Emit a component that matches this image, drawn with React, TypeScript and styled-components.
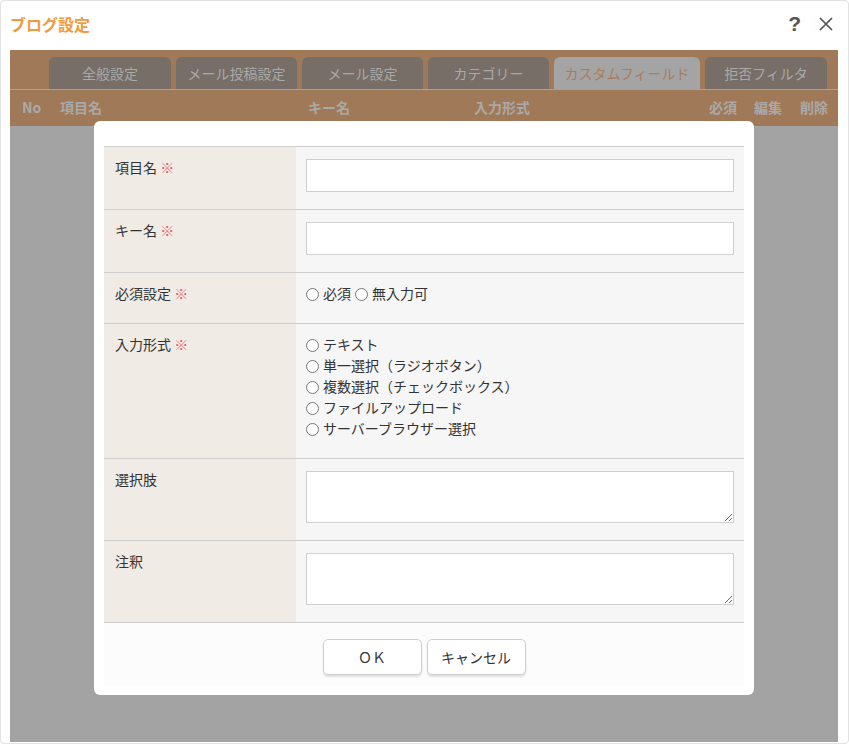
import React from "react";
import styled, { createGlobalStyle } from "styled-components";

const GlobalStyle = createGlobalStyle`
  html, body {
    margin: 0;
    padding: 0;
    background: #fff;
  }
  body {
    font-family: "Noto Sans CJK JP", "Noto Sans", sans-serif;
    color: #333;
  }
  * {
    box-sizing: border-box;
  }
`;

const tabs = [
  { label: "全般設定", width: 122 },
  { label: "メール投稿設定", width: 121 },
  { label: "メール設定", width: 121 },
  { label: "カテゴリー", width: 121 },
  { label: "カスタムフィールド", width: 146, active: true },
  { label: "拒否フィルタ", width: 122 },
];

const columns = ["No", "項目名", "キー名", "入力形式", "必須", "編集", "削除"];

const inputTypes = [
  "テキスト",
  "単一選択（ラジオボタン）",
  "複数選択（チェックボックス）",
  "ファイルアップロード",
  "サーバーブラウザー選択",
];

const App = () => (
  <>
    <GlobalStyle />
    <Window>
      <TitleBar>
        <Title>ブログ設定</Title>
        <TitleActions>
          <HelpIcon>?</HelpIcon>
          <CloseIcon viewBox="0 0 16 16">
            <path d="M2 2 L14 14 M14 2 L2 14" />
          </CloseIcon>
        </TitleActions>
      </TitleBar>

      <Content>
        <ListHeader>
          <TabStrip>
            {tabs.map((t) => (
              <Tab key={t.label} $width={t.width} $active={t.active}>
                {t.label}
              </Tab>
            ))}
          </TabStrip>
          <ColumnRow>
            {columns.map((c) => (
              <ColumnName key={c}>{c}</ColumnName>
            ))}
          </ColumnRow>
        </ListHeader>
        <ListBody />

        <Backdrop>
          <Modal>
            <FormTable>
              <FormRow>
                <LabelCell>
                  項目名 <Required>※</Required>
                </LabelCell>
                <ValueCell>
                  <TextInput type="text" />
                </ValueCell>
              </FormRow>
              <FormRow>
                <LabelCell>
                  キー名 <Required>※</Required>
                </LabelCell>
                <ValueCell>
                  <TextInput type="text" />
                </ValueCell>
              </FormRow>
              <FormRow>
                <LabelCell>
                  必須設定 <Required>※</Required>
                </LabelCell>
                <ValueCell>
                  <InlineRadios>
                    <RadioLabel>
                      <Radio type="radio" name="required" />
                      必須
                    </RadioLabel>
                    <RadioLabel>
                      <Radio type="radio" name="required" />
                      無入力可
                    </RadioLabel>
                  </InlineRadios>
                </ValueCell>
              </FormRow>
              <FormRow>
                <LabelCell>
                  入力形式 <Required>※</Required>
                </LabelCell>
                <ValueCell>
                  <RadioList>
                    {inputTypes.map((t) => (
                      <RadioLabel key={t}>
                        <Radio type="radio" name="type" />
                        {t}
                      </RadioLabel>
                    ))}
                  </RadioList>
                </ValueCell>
              </FormRow>
              <FormRow>
                <LabelCell>選択肢</LabelCell>
                <ValueCell>
                  <TextArea />
                </ValueCell>
              </FormRow>
              <FormRow>
                <LabelCell>注釈</LabelCell>
                <ValueCell>
                  <TextArea />
                </ValueCell>
              </FormRow>
            </FormTable>
            <Footer>
              <Button>ＯＫ</Button>
              <Button>キャンセル</Button>
            </Footer>
          </Modal>
        </Backdrop>
      </Content>
    </Window>
  </>
);

export default App;

const Window = styled.div`
  width: 849px;
  height: 744px;
  border: 1px solid #e2e2e2;
  border-radius: 4px;
  background: #fff;
  padding: 0 10px 1px 9px;
  display: flex;
  flex-direction: column;
`;

const TitleBar = styled.div`
  height: 49px;
  display: flex;
  align-items: center;
  justify-content: space-between;
  padding-bottom: 4px;
`;

const Title = styled.h1`
  margin: 0;
  font-size: 16px;
  line-height: 20px;
  font-weight: bold;
  color: #f39a3f;
`;

const TitleActions = styled.div`
  display: flex;
  align-items: center;
  gap: 17px;
  padding-right: 4px;
`;

const HelpIcon = styled.span`
  font-family: "Liberation Sans", Arial, sans-serif;
  font-size: 21px;
  font-weight: bold;
  color: #555;
  line-height: 1;
`;

const CloseIcon = styled.svg`
  width: 16px;
  height: 16px;
  fill: none;
  stroke: #555;
  stroke-width: 1.7;
`;

const Content = styled.div`
  position: relative;
  flex: 1;
  display: flex;
  flex-direction: column;
`;

const ListHeader = styled.div`
  background: #a07a58;
  padding-top: 7px;
`;

const TabStrip = styled.div`
  display: flex;
  gap: 5px;
  padding-left: 39px;
  height: 33px;
  border-bottom: 1px solid #b59d87;
`;

const Tab = styled.div<{ $width: number; $active?: boolean }>`
  width: ${({ $width }) => $width}px;
  height: 32px;
  border-radius: 6px 6px 0 0;
  background: ${({ $active }) => ($active ? "#a4a4a4" : "#776e67")};
  color: ${({ $active }) => ($active ? "#a87d5e" : "#a9a9a9")};
  font-size: 14px;
  line-height: 1;
  display: flex;
  align-items: center;
  justify-content: center;
  padding-bottom: 1px;
  white-space: nowrap;
`;

const ColumnRow = styled.div`
  height: 36px;
  display: grid;
  grid-template-columns: 38px 248px 166px 235px 45px 46px 1fr;
  align-items: center;
  padding-left: 12px;
  padding-bottom: 3px;
`;

const ColumnName = styled.span`
  font-size: 14px;
  font-weight: bold;
  color: #a9a9a9;
  line-height: 1;
`;

const ListBody = styled.div`
  flex: 1;
  background: #a3a3a3;
`;

const Backdrop = styled.div`
  position: absolute;
  inset: 0;
  display: flex;
  justify-content: center;
  align-items: flex-start;
  padding-top: 71px;
`;

const Modal = styled.div`
  width: 660px;
  height: 574px;
  background: #fff;
  border-radius: 6px;
  padding: 25px 10px 9px;
`;

const FormTable = styled.div`
  border-top: 1px solid #cdcdcd;
`;

const FormRow = styled.div`
  display: grid;
  grid-template-columns: 192px 1fr;
  border-bottom: 1px solid #cdcdcd;
`;

const LabelCell = styled.div`
  background: #f0ebe5;
  padding: 10px 11px 14px;
  font-size: 14px;
  line-height: 20px;
  color: #333;
`;

const Required = styled.span`
  color: #ec5a6c;
`;

const ValueCell = styled.div`
  background: #f6f6f6;
  padding: 12px 10px 17px;
`;

const TextInput = styled.input`
  display: block;
  width: 100%;
  height: 33px;
  border: 1px solid #cfcfcf;
  background: #fff;
  outline: none;
  padding: 0 6px;
  font: inherit;
`;

const TextArea = styled.textarea`
  display: block;
  width: 100%;
  height: 52px;
  border: 1px solid #cfcfcf;
  background: #fff;
  outline: none;
  resize: vertical;
  padding: 4px 6px;
  font: inherit;
  font-size: 14px;
`;

const InlineRadios = styled.div`
  display: flex;
  gap: 4px;
  margin: -2px 0 2px;
`;

const RadioList = styled.div`
  display: flex;
  flex-direction: column;
  margin: -2px 0 2px;
`;

const RadioLabel = styled.label`
  display: flex;
  align-items: center;
  font-size: 14px;
  line-height: 21px;
  color: #333;
  white-space: nowrap;
`;

const Radio = styled.input`
  appearance: none;
  width: 13px;
  height: 13px;
  margin: 2px 4px 0 0;
  border: 1px solid #777;
  border-radius: 50%;
  background: #fff;
`;

const Footer = styled.div`
  background: #fcfcfc;
  display: flex;
  justify-content: center;
  gap: 5px;
  padding: 16px 0 11px;
`;

const Button = styled.button`
  width: 99px;
  height: 36px;
  border: 1px solid #cfcfcf;
  border-radius: 5px;
  background: #fff;
  box-shadow: 0 2px 2px rgba(0, 0, 0, 0.12);
  font-family: "Noto Sans CJK JP", sans-serif;
  font-size: 14px;
  color: #333;
  cursor: pointer;
`;
